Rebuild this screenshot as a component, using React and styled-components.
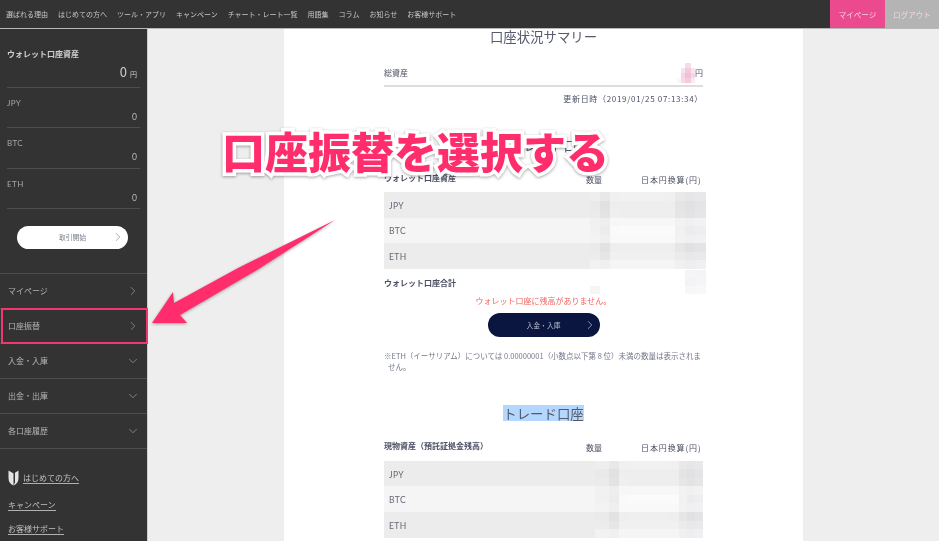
import React from "react";
import styled, { createGlobalStyle } from "styled-components";
import { ChevronRight, ChevronDown } from "lucide-react";

const GlobalStyle = createGlobalStyle`
  html, body {
    margin: 0;
    padding: 0;
    background: #eeeeee;
    font-family: "Noto Sans CJK JP", "Noto Sans", sans-serif;
  }
  * { box-sizing: border-box; }
`;

const Stage = styled.div`
  position: relative;
  width: 939px;
  height: 541px;
  overflow: hidden;
`;

const Screen = styled.div`
  width: 100%;
  height: 100%;
  display: flex;
  flex-direction: column;
  filter: blur(0.35px);
`;

const TopBar = styled.header`
  flex: none;
  height: 29px;
  display: flex;
  justify-content: space-between;
  background: #333333;
  border-bottom: 1px solid #b8b8b8;
`;

const TopNav = styled.nav`
  display: flex;
  align-items: center;
  gap: 10px;
  padding-left: 6px;
`;

const TopLink = styled.span`
  font-size: 7px;
  line-height: 10px;
  color: #c8c8c8;
  white-space: nowrap;
`;

const TopActions = styled.div`
  display: flex;
`;

const TopAction = styled.span`
  width: ${({ $wide }) => ($wide ? "55px" : "54px")};
  display: flex;
  align-items: center;
  justify-content: center;
  font-size: 7.5px;
  color: #f3d6e2;
  background: ${({ $pink }) => ($pink ? "#ec4a8e" : "#b4b4b4")};
`;

const Body = styled.div`
  flex: 1;
  min-height: 0;
  display: flex;
`;

const Sidebar = styled.aside`
  flex: none;
  width: 147px;
  background: #333333;
  color: #c6c6c6;
`;

const Wallet = styled.div`
  padding: 19px 7px 0;
`;

const WalletTitle = styled.div`
  font-size: 8px;
  line-height: 12px;
  font-weight: 700;
  color: #d0d0d0;
`;

const WalletTotal = styled.div`
  height: 28px;
  padding: 5px 3px 0 0;
  text-align: right;
  font-size: 13px;
  line-height: 14px;
  color: #cfcfcf;
  border-bottom: 1px solid #4d4d4d;

  small {
    font-size: 7px;
    margin-left: 3px;
  }
`;

const Balance = styled.div`
  height: 40.33px;
  padding-top: 10px;
  border-bottom: 1px solid #4d4d4d;
`;

const BalanceName = styled.div`
  font-family: "Lato", sans-serif;
  font-size: 8px;
  line-height: 11px;
  letter-spacing: 0.4px;
  color: #a8a8a8;
`;

const BalanceValue = styled.div`
  font-family: "Lato", sans-serif;
  font-size: 8.5px;
  line-height: 11px;
  margin-top: 3px;
  padding-right: 3px;
  text-align: right;
  color: #b8b8b8;
`;

const Pill = styled.div`
  position: relative;
  height: ${({ $dark }) => ($dark ? "24px" : "23px")};
  width: ${({ $dark }) => ($dark ? "112px" : "111px")};
  margin: ${({ $dark }) => ($dark ? "7px auto 0" : "17px 0 0 17px")};
  display: flex;
  align-items: center;
  justify-content: center;
  border-radius: 12px;
  font-size: 6.8px;
  background: ${({ $dark }) => ($dark ? "#0a1640" : "#ffffff")};
  color: ${({ $dark }) => ($dark ? "#b9bdcc" : "#7d8190")};

  svg {
    position: absolute;
    right: 3px;
    top: 50%;
    transform: translateY(-50%);
  }
`;

const Menu = styled.ul`
  list-style: none;
  margin: 24px 0 0;
  padding: 0;
  border-top: 1px solid #4d4d4d;
`;

const MenuItem = styled.li`
  position: relative;
  height: 35px;
  padding: 0 7px 0 8px;
  display: flex;
  align-items: center;
  justify-content: space-between;
  font-size: 8px;
  color: #b4b4b4;
  border-bottom: 1px solid #4d4d4d;

  ${({ $marked }) =>
    $marked &&
    `
    &::after {
      content: "";
      position: absolute;
      left: 1px;
      right: -1px;
      top: -1px;
      bottom: -1px;
      border: 2px solid #f0376f;
    }
  `}
`;

const FooterLinks = styled.div`
  padding: 21px 8px 0;
  display: flex;
  flex-direction: column;
  align-items: flex-start;
  gap: 12px;
`;

const FirstLink = styled.div`
  display: flex;
  align-items: center;
  gap: 4px;
  margin-bottom: 1px;
`;

const FooterLink = styled.span`
  font-size: 8px;
  line-height: 11px;
  color: #c2c2c2;
  border-bottom: 1px solid #b0b0b0;
`;

const Main = styled.main`
  flex: 1;
  min-width: 0;
  overflow: hidden;
  background: #eeeeee;
  border-left: 1px solid #cfcfcf;
  padding-left: 136px;
`;

const Panel = styled.section`
  width: 519px;
  height: 100%;
  padding: 0 100px;
  background: #ffffff;
  color: #4b4f63;
`;

const SectionTitle = styled.h2`
  width: ${({ $selected }) => ($selected ? "81px" : "auto")};
  margin: ${({ $gap }) => $gap}px auto 0;
  font-size: 13.4px;
  line-height: ${({ $selected }) => ($selected ? "16px" : "14px")};
  font-weight: 400;
  text-align: center;
  white-space: nowrap;
  color: #565a6b;
  background: ${({ $selected }) => ($selected ? "#b3d7ff" : "transparent")};
`;

const SummaryRow = styled.div`
  height: 24px;
  margin-top: 20px;
  display: flex;
  align-items: flex-start;
  justify-content: space-between;
  font-size: 8px;
  line-height: 20px;
  border-bottom: 2px solid #dddddd;
`;

const HiddenAmount = styled.div`
  display: flex;
  align-items: flex-start;
`;

const Updated = styled.div`
  margin-top: 7px;
  text-align: right;
  font-size: 8px;
  line-height: 10px;
  letter-spacing: 0.68px;
`;

const TableHead = styled.div`
  height: 26px;
  margin-top: ${({ $gap }) => $gap}px;
  display: grid;
  grid-template-columns: 202px 55px 1fr;
  align-items: center;
  font-size: 8px;
`;

const HeadTitle = styled.strong`
  font-weight: 700;
  margin-top: -4px;
`;

const YenHead = styled.span`
  letter-spacing: 0.9px;
  white-space: nowrap;
`;

const Rows = styled.div`
  display: flex;
  flex-direction: column;
`;

const Row = styled.div`
  height: 25.6px;
  display: flex;
  align-items: center;
  justify-content: space-between;
  padding-left: 5px;
  font-family: "Lato", sans-serif;
  font-size: 8.5px;
  letter-spacing: 0.4px;
  line-height: 12px;
  color: #656876;
  background: ${({ $light }) => ($light ? "#f5f5f5" : "#ececec")};

  span {
    margin-top: 2px;
  }
`;

const Mosaic = styled.div`
  flex: none;
  display: grid;
  grid-template-columns: ${({ $cols }) => $cols};
  grid-auto-rows: ${({ $cell }) => $cell}px;
  margin-right: ${({ $over }) => $over}px;
`;

const MosaicCell = styled.i`
  display: block;
  background: ${({ $c }) => $c};
`;

const TotalRow = styled.div`
  height: 27px;
  display: flex;
  align-items: center;
  justify-content: space-between;
  font-size: 8px;
  font-weight: 700;
  margin-right: -3px;
`;

const Notice = styled.p`
  margin: 0;
  text-align: center;
  font-size: 8px;
  line-height: 10px;
  color: #f0635f;
`;

const Note = styled.p`
  margin: 13px 0 0;
  padding-left: 4px;
  text-indent: -4px;
  font-size: 7.5px;
  line-height: 11px;
  color: #73768a;
`;

const Callout = styled.div`
  position: absolute;
  left: 222px;
  top: 116px;
  font-family: "Noto Sans CJK JP", sans-serif;
  font-size: 43px;
  line-height: 68px;
  font-weight: 900;
  white-space: nowrap;
  color: #ff2d6b;
  -webkit-text-stroke: 7px #ffffff;
  paint-order: stroke fill;
  filter: drop-shadow(0 1px 1.5px rgba(0, 0, 0, 0.35));
`;

const ArrowMark = styled.svg`
  position: absolute;
  left: 0;
  top: 0;
  filter: drop-shadow(0 1px 1.5px rgba(0, 0, 0, 0.35));
`;

const topLinks = ["選ばれる理由", "はじめての方へ", "ツール・アプリ", "キャンペーン", "チャート・レート一覧", "用語集", "コラム", "お知らせ", "お客様サポート"];
const balances = ["JPY", "BTC", "ETH"];
const menu = [
  { label: "マイページ", icon: "right" },
  { label: "口座振替", icon: "right", marked: true },
  { label: "入金・入庫", icon: "down" },
  { label: "出金・出庫", icon: "down" },
  { label: "各口座履歴", icon: "down" },
];

// pixelated amounts: edge cells are darker than the middle ones
const walletCols = "10px 10px 10px 45px 10px 10px 10px 11px";
const tradeCols = "14px 10px 10px 40px 10px 8px 8px 8px";
const pixelRows = {
  JPY: [
    ["#eeeeee", "#e8e8e8", "#f0f0f0", "#f1f1f1", "#f0f0f0", "#e9e9ea", "#e6e6e8", "#e8e8ea"],
    ["#e9e9e9", "#e1e1e1", "#eeeeee", "#eeeeee", "#eeeeee", "#e4e4e4", "#e1e1e3", "#e4e4e6"],
    ["#ebebeb", "#e3e3e3", "#efefef", "#eeeeee", "#eeeeee", "#e6e6e6", "#e3e3e5", "#e6e6e8"],
  ],
  BTC: [
    ["#f1f1f1", "#eeeeee", "#f7f7f7", "#f7f7f7", "#f7f7f7", "#f2f2f2", "#f0f0f1", "#f2f2f3"],
    ["#f1f1f1", "#ececec", "#fafafa", "#fbfbfb", "#fbfbfb", "#f1f1f1", "#ececee", "#eeeef0"],
    ["#f3f3f3", "#efefef", "#f9f9f9", "#f9f9f9", "#f9f9f9", "#f2f2f2", "#f0f0f1", "#f1f1f3"],
  ],
  ETH: [
    ["#eaeaea", "#e2e2e2", "#eeeeee", "#efefef", "#eeeeee", "#e6e6e6", "#e1e1e3", "#e4e4e6"],
    ["#ececec", "#e6e6e6", "#f0f0f0", "#f0f0f0", "#f0f0f0", "#ebebeb", "#e8e8ea", "#e9e9eb"],
    ["#f2f2f2", "#f0f0f0", "#f5f5f5", "#f5f5f5", "#f5f5f5", "#f0f0f0", "#eeeef0", "#f0f0f2"],
  ],
};
const pinkPixels = [
  ["#ffffff", "#ffffff", "#f6dbe8", "#ffffff"],
  ["#ffffff", "#f8e4ee", "#f3c9dc", "#f8e4ee"],
  ["#ffffff", "#f6d6e5", "#f1bfd6", "#f6d6e5"],
  ["#f9f9f9", "#f6d8e6", "#f3cbde", "#fbe9f1"],
];
const totalPixels = [
  ["#ffffff", "#ffffff", "#ffffff", "#f5f5f7", "#f4f4f6"],
  ["#ffffff", "#ffffff", "#ffffff", "#f3f3f5", "#f5f5f7"],
  ["#f5f5f5", "#ffffff", "#ffffff", "#f7f7f9", "#f8f8fa"],
];

const Pixels = ({ rows, cols, cell, over = 0 }) => (
  <Mosaic $cols={cols} $cell={cell} $over={over}>
    {rows.flat().map((c, i) => (
      <MosaicCell key={i} $c={c} />
    ))}
  </Mosaic>
);

const AssetRows = ({ cols, over }) => (
  <Rows>
    {balances.map((name, i) => (
      <Row key={name} $light={i === 1}>
        <span>{name}</span>
        <Pixels rows={pixelRows[name]} cols={cols} cell={8.5} over={over} />
      </Row>
    ))}
  </Rows>
);

const Shield = () => (
  <svg width="11" height="16" viewBox="0 0 11 16">
    <path d="M0.5 0.5 L5.5 3.5 L5.5 15.5 C2 14 0.5 11.5 0.5 8 Z" fill="#e4e4e4" />
    <path d="M10.5 0.5 L7 2.8 L7 12.5 L5.5 15.5 C9 14 10.5 11.5 10.5 8 Z" fill="#e4e4e4" />
  </svg>
);

export default function App() {
  return (
    <Stage>
      <GlobalStyle />
      <Screen>
        <TopBar>
          <TopNav>
            {topLinks.map((t) => (
              <TopLink key={t}>{t}</TopLink>
            ))}
          </TopNav>
          <TopActions>
            <TopAction $pink $wide>マイページ</TopAction>
            <TopAction>ログアウト</TopAction>
          </TopActions>
        </TopBar>
        <Body>
          <Sidebar>
            <Wallet>
              <WalletTitle>ウォレット口座資産</WalletTitle>
              <WalletTotal>
                0<small>円</small>
              </WalletTotal>
              {balances.map((name) => (
                <Balance key={name}>
                  <BalanceName>{name}</BalanceName>
                  <BalanceValue>0</BalanceValue>
                </Balance>
              ))}
            </Wallet>
            <Pill>
              取引開始
              <ChevronRight size={14} strokeWidth={1.2} color="#888" />
            </Pill>
            <Menu>
              {menu.map((m) => (
                <MenuItem key={m.label} $marked={m.marked}>
                  {m.label}
                  {m.icon === "right" ? (
                    <ChevronRight size={14} strokeWidth={1.2} color="#a0a0a0" />
                  ) : (
                    <ChevronDown size={14} strokeWidth={1.2} color="#a0a0a0" />
                  )}
                </MenuItem>
              ))}
            </Menu>
            <FooterLinks>
              <FirstLink>
                <Shield />
                <FooterLink>はじめての方へ</FooterLink>
              </FirstLink>
              <FooterLink>キャンペーン</FooterLink>
              <FooterLink>お客様サポート</FooterLink>
            </FooterLinks>
          </Sidebar>
          <Main>
            <Panel>
              <SectionTitle $gap={0}>口座状況サマリー</SectionTitle>
              <SummaryRow>
                総資産
                <HiddenAmount>
                  <Pixels rows={pinkPixels} cols="4px 4px 6px 4px" cell={5} />
                  円
                </HiddenAmount>
              </SummaryRow>
              <Updated>更新日時（2019/01/25 07:13:34）</Updated>
              <SectionTitle $gap={34}>ウォレット口座</SectionTitle>
              <TableHead $gap={14}>
                <HeadTitle>ウォレット口座資産</HeadTitle>
                <span>数量</span>
                <YenHead>日本円換算(円)</YenHead>
              </TableHead>
              <AssetRows cols={walletCols} over={-3} />
              <TotalRow>
                ウォレット口座合計
                <Pixels rows={totalPixels} cols="10px 75px 10px 11px 10px" cell={8} />
              </TotalRow>
              <Notice>ウォレット口座に残高がありません。</Notice>
              <Pill $dark>
                入金・入庫
                <ChevronRight size={14} strokeWidth={1.2} color="#c8cbd8" />
              </Pill>
              <Note>※ETH（イーサリアム）については 0.00000001（小数点以下第 8 位）未満の数量は表示されません。</Note>
              <SectionTitle $gap={33} $selected>トレード口座</SectionTitle>
              <TableHead $gap={14}>
                <HeadTitle>現物資産（預託証拠金残高）</HeadTitle>
                <span>数量</span>
                <YenHead>日本円換算(円)</YenHead>
              </TableHead>
              <AssetRows cols={tradeCols} over={0} />
            </Panel>
          </Main>
        </Body>
      </Screen>
      <Callout>口座振替を選択する</Callout>
      <ArrowMark width="939" height="541" viewBox="0 0 939 541">
        <polygon points="335,220 257,270 180,315 187,323 152,323 173,292 174,303 238,268" fill="#ff2d6b" />
      </ArrowMark>
    </Stage>
  );
}
